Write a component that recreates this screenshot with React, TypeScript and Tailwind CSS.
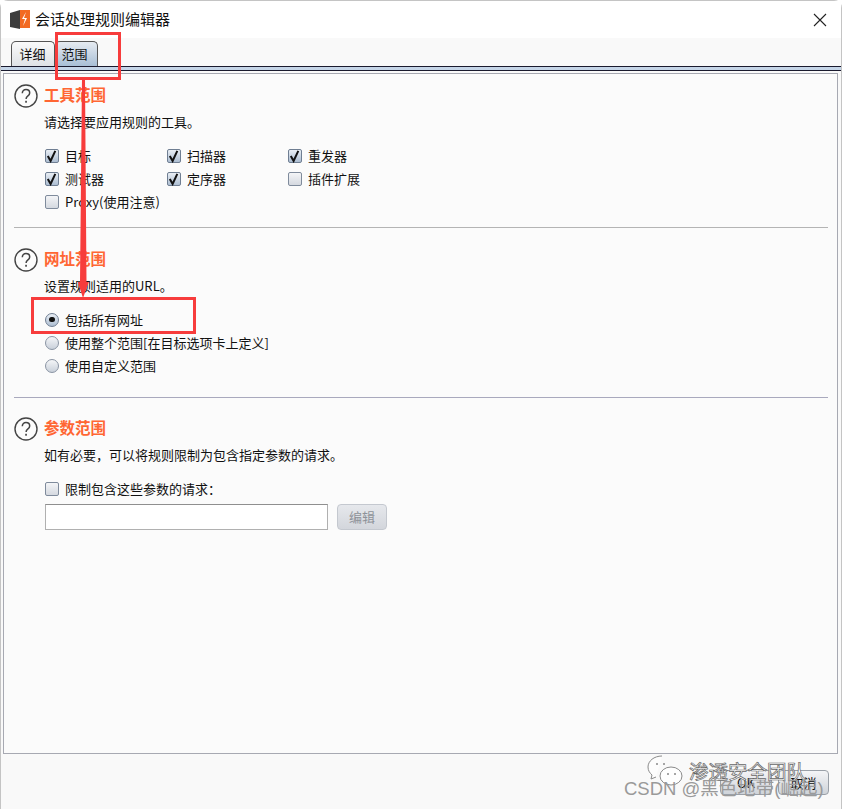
import React from "react";

const font = { fontFamily: '"Noto Sans CJK SC","Liberation Sans",sans-serif' };

function Help() {
  return (
    <svg width="24" height="26" viewBox="0 0 24 26" className="shrink-0">
      <circle cx="12" cy="13" r="11" fill="#fcfcfc" stroke="#444" strokeWidth="1.4" />
      <path d="M8.3 10.2c0-2.3 1.6-3.6 3.7-3.6s3.7 1.3 3.7 3.3c0 1.6-.9 2.4-2 3.2-1 .7-1.6 1.4-1.6 2.9" fill="none" stroke="#444" strokeWidth="1.5" />
      <rect x="11.2" y="17.8" width="1.7" height="1.9" fill="#444" />
    </svg>
  );
}

function Check({ on }: { on?: boolean }) {
  return (
    <span className={on ? "relative block h-[14px] w-[14px] shrink-0 rounded-[2px] border border-[#6f7e92] bg-gradient-to-b from-[#e9eef4] to-[#adbed2]" : "relative block h-[14px] w-[14px] shrink-0 rounded-[2px] border border-[#7f8b9c] bg-gradient-to-b from-[#f4f5f7] to-[#d5d9e0]"}>
      {on && (
        <svg width="14" height="14" viewBox="0 0 14 14" className="absolute left-[-1px] top-[-1px]">
          <path d="M2.8 7 5.6 12 10.3 1.8" fill="none" stroke="#111" strokeWidth="2" />
        </svg>
      )}
    </span>
  );
}

function CheckItem({ label, on }: { label: string; on?: boolean }) {
  return (
    <div className="flex h-[23px] items-center gap-[6px] text-[13px] text-[#111]">
      <Check on={on} />
      <span className="whitespace-nowrap">{label}</span>
    </div>
  );
}

function Radio({ label, on }: { label: string; on?: boolean }) {
  return (
    <div className="flex h-[23px] items-center gap-[6px] text-[13px] text-[#111]">
      <span className={on ? "flex h-[14px] w-[14px] shrink-0 items-center justify-center rounded-full border border-[#6f7e92] bg-gradient-to-b from-[#e9eef4] to-[#adbed2]" : "flex h-[14px] w-[14px] shrink-0 items-center justify-center rounded-full border border-[#8a94a3] bg-gradient-to-b from-[#f5f6f8] to-[#c9d0da]"}>
        {on && <span className="block h-[5px] w-[6px] rounded-full bg-[#111]" />}
      </span>
      <span className="whitespace-nowrap">{label}</span>
    </div>
  );
}

function Heading({ title }: { title: string }) {
  return (
    <div className="flex h-[26px] items-center gap-[6px] pl-[10px]">
      <Help />
      <span className="mb-[3px] text-[15.5px] font-bold text-[#ff6633]">{title}</span>
    </div>
  );
}

export default function App() {
  return (
    <div style={font} className="relative h-[809px] w-[842px] overflow-hidden bg-white">
      <div className="flex h-[809px] flex-col rounded-t-[8px] border border-[#c4c4c4] border-b-0 bg-[#f9f9f9]">
        <div className="flex h-[37px] items-center bg-white pl-[9px] pr-[14px]">
          <svg width="21" height="21" viewBox="0 0 21 21" className="shrink-0">
            <path d="M0 4 10 1v19L0 18z" fill="#3c3c3c" />
            <path d="M10 1h10v18H10z" fill="#f26a22" />
            <path d="M16 3 12 10h3l-2 7 4-8h-3l2-6z" fill="#fff" />
          </svg>
          <span className="ml-[4px] text-[15px] text-[#111]">会话处理规则编辑器</span>
          <svg width="14" height="14" viewBox="0 0 14 14" className="ml-auto">
            <path d="M1 1l12 12M13 1 1 13" stroke="#222" strokeWidth="1.1" />
          </svg>
        </div>

        <div className="flex h-[28px] items-end gap-0 pl-[10px]">
          <div className="flex h-[25px] w-[44px] items-center justify-center rounded-t-[5px] border border-b-0 border-[#555] bg-gradient-to-b from-[#fafafa] to-[#dfe2e6] pr-[1px] text-[13px] text-[#111]">详细</div>
          <div className="flex h-[25px] w-[43px] items-center justify-center rounded-t-[5px] border border-b-0 border-l-0 border-[#555] bg-gradient-to-b from-[#e6ebf1] to-[#a9bfd6] pr-[3px] text-[13px] text-[#111]">范围</div>
        </div>
        <div className="h-[5px] border-y border-[#1a1a2e] bg-[#c5d5e8]" />

        <div className="ml-[2px] mr-[3px] mt-[2px] flex h-[681px] flex-col border border-[#a7a9b2] bg-[#fbfbfb] text-[13px] text-[#111]">
          <div className="flex h-[153px] flex-col pt-[9px]">
            <Heading title="工具范围" />
            <p className="mt-[3px] h-[20px] pl-[40px] leading-[20px]">请选择要应用规则的工具。</p>
            <div className="mt-[12px] grid grid-cols-[122px_121px_120px] pl-[41px]">
              <CheckItem label="目标" on />
              <CheckItem label="扫描器" on />
              <CheckItem label="重发器" on />
              <CheckItem label="测试器" on />
              <CheckItem label="定序器" on />
              <CheckItem label="插件扩展" />
              <CheckItem label="Proxy(使用注意)" />
            </div>
          </div>
          <div className="ml-[10px] mr-[9px] h-px bg-[#b4b4b4]" />
          <div className="flex h-[169px] flex-col pt-[19px]">
            <Heading title="网址范围" />
            <p className="mt-[3px] h-[20px] pl-[40px] leading-[20px]">设置规则适用的URL。</p>
            <div className="mt-[12px] pl-[41px]">
              <Radio label="包括所有网址" on />
              <Radio label="使用整个范围[在目标选项卡上定义]" />
              <Radio label="使用自定义范围" />
            </div>
          </div>
          <div className="ml-[10px] mr-[9px] h-px bg-[#a9a9bd]" />
          <div className="flex flex-col pt-[18px]">
            <Heading title="参数范围" />
            <p className="mt-[3px] h-[20px] pl-[40px] leading-[20px]">如有必要，可以将规则限制为包含指定参数的请求。</p>
            <div className="mt-[12px] pl-[41px]">
              <CheckItem label="限制包含这些参数的请求：" />
            </div>
            <div className="mt-[4px] flex gap-[9px] pl-[41px]">
              <div className="h-[26px] w-[283px] border border-[#b0b0b0] border-t-[#8f8f8f] bg-white" />
              <div className="flex h-[26px] w-[50px] items-center justify-center rounded-[4px] border border-[#c4c8cf] bg-gradient-to-b from-[#e6e8ec] to-[#d3d6dc] text-[#8e9299]">编辑</div>
            </div>
          </div>
        </div>

        <div className="flex flex-1 items-start justify-end gap-[6px] pr-[12px] pt-[16px]">
          <div className="flex h-[25px] w-[52px] items-center justify-center rounded-[4px] border border-[#9aa0a8] bg-gradient-to-b from-[#f4f5f7] to-[#cfd3d9] text-[13px] text-[#111]">OK</div>
          <div className="flex h-[25px] w-[51px] items-center justify-center rounded-[4px] border border-[#9aa0a8] bg-gradient-to-b from-[#f4f5f7] to-[#cfd3d9] text-[13px] text-[#111]">取消</div>
        </div>
      </div>

      {/* red annotations */}
      <div className="absolute left-[55px] top-[32px] h-[48px] w-[66px] border-[3px] border-[#f73c3c]" />
      <div className="absolute left-[31px] top-[297px] h-[37px] w-[165px] border-[3px] border-[#f73c3c]" />
      <svg width="20" height="240" viewBox="0 0 20 240" className="absolute left-[73px] top-[70px]">
        <path d="M9 8 12 8 13.5 212H15.8L10 228 4.8 212H7z" fill="#f73c3c" />
      </svg>

      {/* watermark */}
      <svg width="36" height="34" viewBox="0 0 36 34" className="absolute left-[647px] top-[755px]">
        <path d="M15 1C7 1 1 6 1 12c0 4 2 6 4 8l-1 4 5-2" fill="#ffffff" fillOpacity="0.7" stroke="#8a8a8a" strokeWidth="1" />
        <ellipse cx="24" cy="21" rx="11" ry="9" fill="#ffffff" fillOpacity="0.8" stroke="#8a8a8a" strokeWidth="1" />
        <circle cx="10" cy="9" r="1" fill="#888" />
        <circle cx="17" cy="9" r="1" fill="#888" />
        <circle cx="21" cy="19" r="1" fill="#888" />
        <circle cx="28" cy="19" r="1" fill="#888" />
      </svg>
      <span className="absolute left-[689px] top-[757px] text-[19.5px] leading-[27px] text-[#ffffff] [-webkit-text-stroke:0.7px_#666]">渗透安全团队</span>
      <span className="absolute left-[624px] top-[777px] whitespace-nowrap text-[18.5px] leading-[24px] text-[#9a9a9a]" style={{ fontFamily: '"Liberation Sans","Noto Sans CJK SC",sans-serif' }}>CSDN @黑色地带(崛起)</span>
    </div>
  );
}
